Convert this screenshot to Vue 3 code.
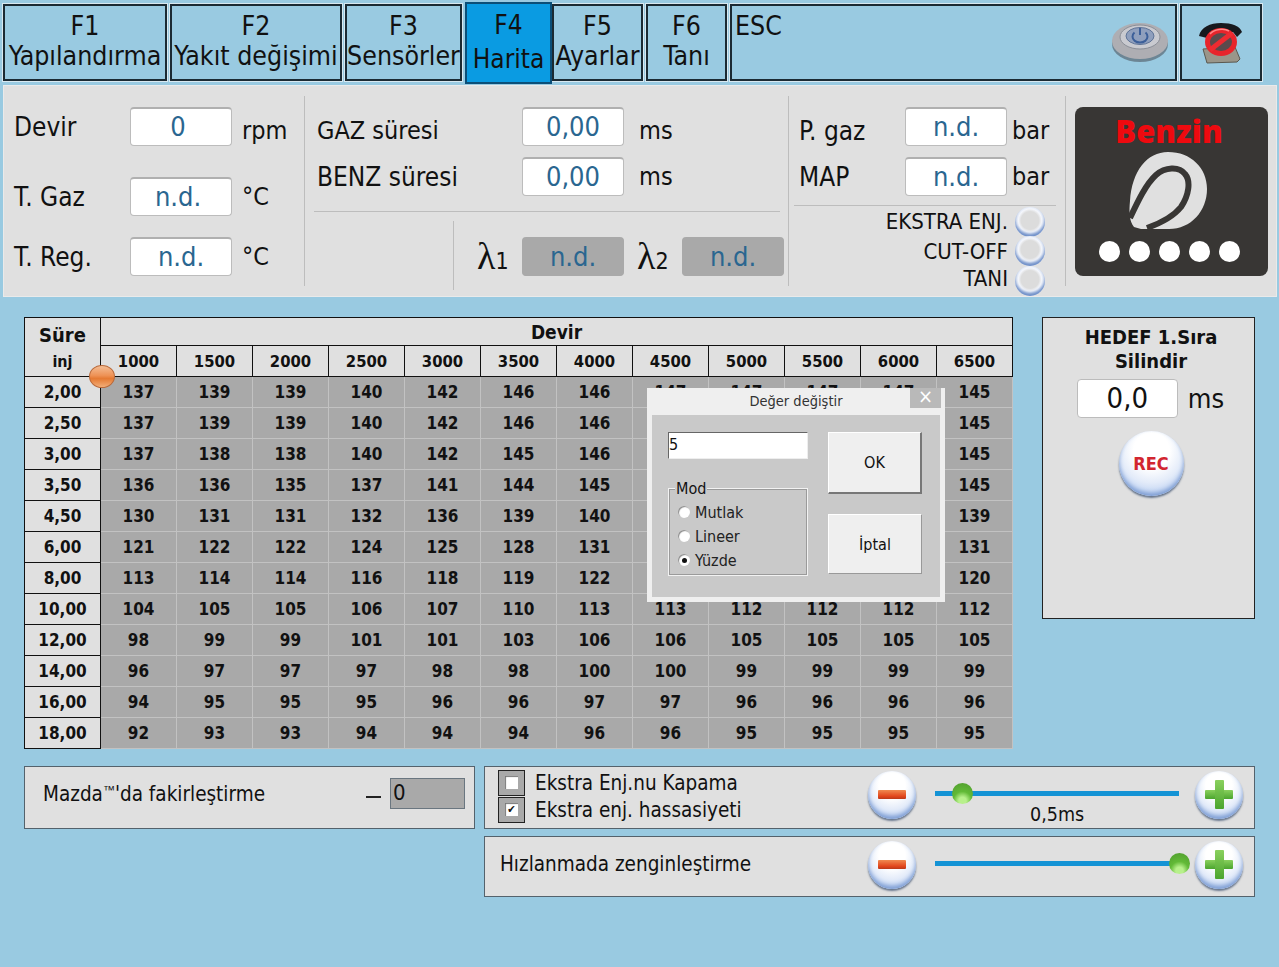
<template>
  <div class="screen">
    <!-- top bar -->
    <div class="topbar">
      <div v-for="t in tabs" :key="t.key" class="tab" :class="{ active: t.active }" :style="{ width: t.w + 'px' }">
        <span>{{ t.key }}</span>
        <span>{{ t.label }}</span>
      </div>
      <div class="tab esc">
        <span class="esc-label">ESC</span>
        <svg class="power" width="60" height="44" viewBox="0 0 60 44">
          <ellipse cx="30" cy="25" rx="28" ry="18" fill="#4f5660" opacity="0.6" />
          <ellipse cx="30" cy="22" rx="28" ry="18" fill="#aeaeb3" />
          <ellipse cx="30" cy="18" rx="20" ry="12" fill="#c9cad0" stroke="#8b8f98" />
          <ellipse cx="30" cy="17" rx="14" ry="8.5" fill="#8f9fbd" stroke="#5f7497" />
          <path d="M24.5 13.5a7.5 6 0 1 0 11 0" fill="none" stroke="#3c5f99" stroke-width="2" />
          <path d="M30 9v7" stroke="#3c5f99" stroke-width="2" />
        </svg>
      </div>
      <div class="tab phone">
        <svg width="46" height="46" viewBox="0 0 46 46">
          <path d="M1 16C3 7 12 3 23 3s19 3 21 9l-5 5-4-5H12l-3 6z" fill="#17191e" />
          <path d="M5 29l32-2 5 12-3 3-30 1z" fill="#9a968a" stroke="#5a584f" />
          <ellipse cx="23" cy="22" rx="16" ry="14" fill="#e8242b" />
          <ellipse cx="23" cy="22" rx="11" ry="9" fill="#5b4a4c" />
          <path d="M12 30L34 13" stroke="#ee2b31" stroke-width="5" />
          <path d="M12 14c4-5 14-6 19-3" fill="none" stroke="#f88" stroke-width="1.5" />
        </svg>
      </div>
    </div>

    <!-- live values -->
    <div class="panel">
      <div class="sec sec-1">
        <div v-for="r in sensors" :key="r.label" class="row-1" :class="r.cls">
          <span class="lbl">{{ r.label }}</span>
          <div class="val" :class="{ nudge: r.nudge }">{{ r.value }}</div>
          <span class="unit" :class="{ down: r.unit === 'rpm' }">{{ r.unit }}</span>
        </div>
      </div>

      <div class="sec sec-2">
        <div class="times">
          <div class="row-2">
            <span class="lbl w205 down gaz">GAZ süresi</span>
            <div class="val">0,00</div>
            <span class="unit ms down">ms</span>
          </div>
          <div class="row-2">
            <span class="lbl w205">BENZ süresi</span>
            <div class="val">0,00</div>
            <span class="unit ms">ms</span>
          </div>
        </div>
        <div class="lambda-row">
          <div class="lambda-group">
            <span class="lam">λ<small>1</small></span>
            <div class="val off">n.d.</div>
            <span class="lam lam-2">λ<small>2</small></span>
            <div class="val off">n.d.</div>
          </div>
        </div>
      </div>

      <div class="sec sec-3">
        <div class="times">
          <div class="row-3">
            <span class="lbl w111 down">P. gaz</span>
            <div class="val">n.d.</div>
            <span class="unit bar down">bar</span>
          </div>
          <div class="row-3">
            <span class="lbl w111">MAP</span>
            <div class="val">n.d.</div>
            <span class="unit bar">bar</span>
          </div>
        </div>
        <div class="leds">
          <div v-for="l in leds" :key="l" class="led-row">
            <span>{{ l }}</span>
            <i class="led"></i>
          </div>
        </div>
      </div>

      <div class="sec-4">
        <div class="logo">
          <div class="logo-title">Benzin</div>
          <svg class="petal" width="80" height="80" viewBox="0 0 80 80">
            <path d="M5 76C0 70 0 60 1 50 3 20 18 1 39 1c23 0 39 16 39 37 0 22-16 40-38 40H12z" fill="#e0e0e0" />
            <path d="M1 67C9 50 17 33 27 24 36 16 50 15 56 23c6 7 4 21-4 33-8 10-20 16-34 21" fill="none" stroke="#383634" stroke-width="6" />
          </svg>
          <div class="dots"><i v-for="n in 5" :key="n"></i></div>
        </div>
      </div>
    </div>

    <!-- map + side card -->
    <div class="content">
      <div class="map-wrap">
        <div class="map">
          <div class="c head sure"><b>Süre</b><span>inj</span></div>
          <div class="c head devir">Devir</div>
          <div v-for="r in rpm" :key="r" class="c head rpm">{{ r }}</div>
          <template v-for="row in rows" :key="row.t">
            <div class="c head inj">{{ row.t }}</div>
            <div v-for="(v, i) in row.v" :key="i" class="c cell">{{ v }}</div>
          </template>
        </div>
        <i class="marker"></i>

        <!-- modal -->
        <div class="dialog">
          <div class="dlg-title">
            <span>Değer değiştir</span>
            <i class="dlg-x">×</i>
          </div>
          <div class="dlg-body">
            <div class="dlg-left">
              <div class="dlg-input">5</div>
              <div class="mod">
                <span class="mod-legend">Mod</span>
                <div v-for="m in mods" :key="m" class="radio-row">
                  <i class="radio" :class="{ on: m === 'Yüzde' }"></i>{{ m }}
                </div>
              </div>
            </div>
            <div class="dlg-right">
              <div class="dlg-btn ok">OK</div>
              <div class="dlg-btn cancel">İptal</div>
            </div>
          </div>
        </div>
      </div>

      <div class="side">
        <div class="side-title">HEDEF 1.Sıra<br />Silindir</div>
        <div class="side-row">
          <div class="side-val">0,0</div>
          <span class="side-unit">ms</span>
        </div>
        <div class="round rec">REC</div>
      </div>
    </div>

    <!-- bottom cards -->
    <div class="bottom">
      <div class="card mazda">
        <span class="mazda-txt">Mazda<sup>™</sup>'da fakirleştirme</span>
        <span class="dash"></span>
        <div class="mazda-val">0</div>
      </div>
      <div class="bottom-right">
        <div class="card extra">
          <div class="checks">
            <div class="check-row"><i class="check"><i></i></i>Ekstra Enj.nu Kapama</div>
            <div class="check-row"><i class="check"><i class="tick">✔</i></i>Ekstra enj. hassasiyeti</div>
          </div>
          <div class="round minus"><i></i></div>
          <div class="slider">
            <div class="track"><i class="thumb" style="left: 17px"></i></div>
            <span class="slider-val">0,5ms</span>
          </div>
          <div class="round plus"><i></i><i></i></div>
        </div>
        <div class="card accel">
          <span class="accel-txt">Hızlanmada zenginleştirme</span>
          <div class="round minus"><i></i></div>
          <div class="slider">
            <div class="track"><i class="thumb" style="left: 234px"></i></div>
          </div>
          <div class="round plus"><i></i><i></i></div>
        </div>
      </div>
    </div>
  </div>
</template>

<script setup>
const tabs = [
  { key: 'F1', label: 'Yapılandırma', w: 164 },
  { key: 'F2', label: 'Yakıt değişimi', w: 172 },
  { key: 'F3', label: 'Sensörler', w: 117 },
  { key: 'F4', label: 'Harita', w: 87, active: true },
  { key: 'F5', label: 'Ayarlar', w: 91 },
  { key: 'F6', label: 'Tanı', w: 81 },
]

const sensors = [
  { label: 'Devir', value: '0', unit: 'rpm', cls: 'r-a', nudge: true },
  { label: 'T. Gaz', value: 'n.d.', unit: '°C', cls: 'r-b', nudge: true },
  { label: 'T. Reg.', value: 'n.d.', unit: '°C', cls: 'r-c' },
]

const leds = ['EKSTRA ENJ.', 'CUT-OFF', 'TANI']
const mods = ['Mutlak', 'Lineer', 'Yüzde']
const rpm = [1000, 1500, 2000, 2500, 3000, 3500, 4000, 4500, 5000, 5500, 6000, 6500]

// the dialog hides columns 4500-6000 from the 2,50 row down to 8,00
const rows = [
  { t: '2,00', v: [137, 139, 139, 140, 142, 146, 146, 147, 147, 147, 147, 145] },
  { t: '2,50', v: [137, 139, 139, 140, 142, 146, 146, '', '', '', '', 145] },
  { t: '3,00', v: [137, 138, 138, 140, 142, 145, 146, '', '', '', '', 145] },
  { t: '3,50', v: [136, 136, 135, 137, 141, 144, 145, '', '', '', '', 145] },
  { t: '4,50', v: [130, 131, 131, 132, 136, 139, 140, '', '', '', '', 139] },
  { t: '6,00', v: [121, 122, 122, 124, 125, 128, 131, '', '', '', '', 131] },
  { t: '8,00', v: [113, 114, 114, 116, 118, 119, 122, '', '', '', '', 120] },
  { t: '10,00', v: [104, 105, 105, 106, 107, 110, 113, 113, 112, 112, 112, 112] },
  { t: '12,00', v: [98, 99, 99, 101, 101, 103, 106, 106, 105, 105, 105, 105] },
  { t: '14,00', v: [96, 97, 97, 97, 98, 98, 100, 100, 99, 99, 99, 99] },
  { t: '16,00', v: [94, 95, 95, 95, 96, 96, 97, 97, 96, 96, 96, 96] },
  { t: '18,00', v: [92, 93, 93, 94, 94, 94, 96, 96, 95, 95, 95, 95] },
]
</script>

<style>
html,
body {
  margin: 0;
  background: #99cae1;
}
</style>

<style scoped>
.screen {
  width: 1279px;
  height: 967px;
  overflow: hidden;
  background: #99cae1;
  color: #111;
  font-family: 'DejaVu Sans', Tahoma, sans-serif;
  font-stretch: condensed;
}
i {
  font-style: normal;
  display: block;
}

/* top bar */
.topbar {
  display: flex;
  gap: 3px;
  padding: 4px 0 0 3px;
  height: 81px;
  box-sizing: border-box;
  align-items: flex-start;
}
.tab {
  height: 77px;
  box-sizing: border-box;
  border: 2px solid #1b2a33;
  box-shadow: 0 0 0 1px #d8e8f0;
  display: flex;
  flex-direction: column;
  align-items: center;
  font-size: 26.5px;
  line-height: 30px;
  padding-top: 5px;
  white-space: nowrap;
  background: #99cae1;
}
.tab.active {
  margin-top: -2px;
  height: 82px;
  margin-right: -3px;
  padding-top: 4px;
  line-height: 34px;
  font-size: 26px;
  background: #0a9be2;
  border-color: #0b4f78;
  box-shadow: none;
  z-index: 1;
}
.esc {
  width: 447px;
  position: relative;
  align-items: flex-start;
  padding-left: 3px;
}
.esc-label {
  display: block;
}
.power {
  position: absolute;
  right: 5px;
  top: 13px;
}
.phone {
  width: 82px;
  justify-content: center;
  padding-top: 0;
}

/* live panel */
.panel {
  margin: 4px 2px 0 3px;
  height: 212px;
  background: #e0e0e0;
  box-shadow: inset 0 0 0 1px #eaeaea;
  display: flex;
  font-size: 25px;
}
.sec {
  margin-top: 11px;
  height: 190px;
  border-right: 1px solid #bdbdbd;
  box-sizing: border-box;
}
.sec-1 {
  width: 302px;
  padding: 11px 0 0 11px;
}
.row-1 {
  display: flex;
  align-items: center;
  height: 39px;
}
.r-b {
  margin-top: 31px;
}
.r-c {
  margin-top: 21px;
}
.row-1 .lbl {
  width: 116px;
}
.row-1 .unit {
  margin-left: 10px;
}
.lbl,
.unit {
  white-space: nowrap;
}
.lbl {
  font-size: 26px;
}
.gaz {
  font-size: 25px;
}
.down {
  position: relative;
  top: 4px;
}
.val {
  width: 102px;
  height: 39px;
  box-sizing: border-box;
  flex: none;
  background: #fff;
  border: 1px solid #bcbcbc;
  border-top: 2px solid #b0b0b0;
  border-radius: 4px;
  color: #2a6690;
  font-size: 27px;
  line-height: 35px;
  text-align: center;
}
.val.nudge {
  padding-right: 6px;
}
.val.off {
  background: #a9a9a9;
  border-color: #a9a9a9;
}

.sec-2 {
  width: 484px;
  padding: 11px 8px 0 9px;
}
.times {
  display: flex;
  flex-direction: column;
  gap: 11px;
}
.row-2,
.row-3 {
  display: flex;
  align-items: center;
}
.row-2 {
  padding-left: 3px;
}
.w205 {
  width: 205px;
}
.ms {
  margin-left: 15px;
}
.lambda-row {
  margin-top: 15px;
  border-top: 1px solid #bdbdbd;
  height: 79px;
  padding-top: 9px;
  box-sizing: border-box;
  display: flex;
  justify-content: flex-end;
}
.lambda-group {
  width: 331px;
  box-sizing: border-box;
  height: 69px;
  border-left: 1px solid #bdbdbd;
  display: flex;
  align-items: flex-start;
  padding: 16px 0 0 23px;
  margin-right: -4px;
}
.lam {
  width: 45px;
  flex: none;
  font-family: 'Liberation Serif', serif;
  font-size: 38px;
  line-height: 38px;
  white-space: nowrap;
}
.lam small {
  font-family: 'DejaVu Sans', sans-serif;
  font-size: 23px;
}
.lam-2 {
  margin-left: 13px;
}

.sec-3 {
  width: 277px;
  padding: 11px 9px 0 5px;
}
.w111 {
  width: 111px;
  padding-left: 5px;
  box-sizing: border-box;
}
.bar {
  margin-left: 5px;
}
.leds {
  margin-top: 9px;
  border-top: 1px solid #bdbdbd;
  font-size: 22px;
}
.led-row {
  height: 29.5px;
  display: flex;
  align-items: center;
  justify-content: flex-end;
  padding-right: 11px;
  gap: 7px;
  position: relative;
  top: 1px;
}
.led-row:last-child span {
  position: relative;
  top: -2px;
}
.led {
  width: 30px;
  height: 30px;
  border-radius: 50%;
  box-sizing: border-box;
  background: radial-gradient(circle at 50% 45%, #dcdcdc 0 40%, #f4f6fb 52%, #9db6e2 100%);
  box-shadow: inset 0 -3px 3px #6f8fc8;
  flex: none;
}
.sec-4 {
  padding: 22px 0 0 9px;
}
.logo {
  width: 193px;
  height: 169px;
  box-sizing: border-box;
  padding-right: 5px;
  border-radius: 8px;
  background: #383634;
  display: flex;
  flex-direction: column;
  align-items: center;
}
.logo-title {
  font-family: 'Open Sans', 'DejaVu Sans', sans-serif;
  font-stretch: normal;
  color: #ee0a0f;
  font-weight: 800;
  font-size: 31px;
  line-height: 38px;
  margin-top: 5px;
}
.petal {
  margin-top: 1px;
}
.dots {
  display: flex;
  gap: 9px;
  margin-top: 10px;
}
.dots i {
  width: 21px;
  height: 21px;
  border-radius: 50%;
  background: #fff;
}

/* map */
.content {
  display: flex;
  padding: 20px 0 0 24px;
  align-items: flex-start;
}
.map-wrap {
  position: relative;
  width: 989px;
  height: 432px;
}
.map {
  display: grid;
  grid-template-columns: 77px repeat(12, 76px);
  grid-template-rows: 29px 31px repeat(12, 31px);
  font-weight: 700;
  font-size: 17px;
}
.c {
  box-sizing: border-box;
  display: flex;
  align-items: center;
  justify-content: center;
}
.head {
  background: #e0e0e0;
  border-right: 1px solid #111;
  border-bottom: 1px solid #111;
}
.sure {
  grid-row: 1 / 3;
  border-left: 1px solid #111;
  border-top: 1px solid #111;
  flex-direction: column;
  gap: 5px;
  font-size: 16px;
}
.sure b {
  font-size: 20px;
}
.devir {
  grid-column: 2 / 14;
  border-top: 1px solid #111;
  font-size: 19px;
}
.rpm {
  font-size: 16.5px;
}
.inj {
  border-left: 1px solid #111;
}
.cell {
  background: #a9a9a9;
  border-right: 1px solid #c2c2c2;
  border-bottom: 1px solid #c2c2c2;
}
.marker {
  position: absolute;
  left: 65px;
  top: 48px;
  width: 26px;
  height: 23px;
  border-radius: 50%;
  border: 1px solid #b9693a;
  box-sizing: border-box;
  background: linear-gradient(#f4bd94 0, #ee9256 45%, #e57a33 60%, #f2ad78 100%);
}

/* dialog */
.dialog {
  position: absolute;
  left: 623px;
  top: 71px;
  width: 298px;
  height: 214px;
  box-sizing: border-box;
  background: #efefef;
  padding: 0 5px 5px;
  display: flex;
  flex-direction: column;
}
.dlg-title {
  height: 27px;
  flex: none;
  position: relative;
  font-size: 14.5px;
  line-height: 27px;
  text-align: center;
  color: #333;
}
.dlg-x {
  position: absolute;
  right: -1px;
  top: 0;
  width: 31px;
  height: 20px;
  line-height: 17px;
  background: #b9b9b9;
  color: #fff;
  font-size: 20px;
}
.dlg-body {
  flex: 1;
  background: #c9c9c9;
  display: flex;
  padding: 17px 18px 0 16px;
  gap: 20px;
}
.dlg-left {
  width: 140px;
}
.dlg-input {
  height: 27px;
  box-sizing: border-box;
  background: #fff;
  border-top: 1px solid #666;
  border-left: 1px solid #666;
  border-right: 1px solid #eee;
  border-bottom: 1px solid #eee;
  font-size: 16px;
  line-height: 24px;
}
.mod {
  margin-top: 29px;
  height: 88px;
  box-sizing: border-box;
  border: 1px solid #f2f2f2;
  outline: 1px solid #9a9a9a;
  outline-offset: -2px;
  position: relative;
  padding: 11px 0 0 9px;
  font-size: 16px;
}
.mod-legend {
  position: absolute;
  left: 6px;
  top: -9px;
  line-height: 18px;
  background: #c9c9c9;
  padding: 0 1px;
}
.radio-row {
  display: flex;
  align-items: center;
  height: 24px;
  gap: 5px;
  color: #222;
}
.radio {
  width: 12px;
  height: 12px;
  border-radius: 50%;
  background: #fff;
  box-shadow: inset 1px 1px 1px #888;
  position: relative;
}
.radio.on::after {
  content: '';
  position: absolute;
  left: 3.5px;
  top: 3.5px;
  width: 5px;
  height: 5px;
  border-radius: 50%;
  background: #111;
}
.dlg-right {
  width: 94px;
}
.dlg-btn {
  background: #efefef;
  display: flex;
  align-items: center;
  justify-content: center;
  box-sizing: border-box;
  font-size: 16px;
  border-top: 1px solid #fff;
  border-left: 1px solid #fff;
  border-right: 2px solid #777;
  border-bottom: 2px solid #777;
}
.ok {
  height: 62px;
}
.cancel {
  height: 60px;
  margin-top: 20px;
  border-right-width: 1px;
  border-bottom-width: 1px;
  border-right-color: #999;
  border-bottom-color: #999;
}

/* side card */
.side {
  margin-left: 29px;
  width: 213px;
  height: 302px;
  box-sizing: border-box;
  background: #e0e0e0;
  border: 1px solid #222;
  display: flex;
  flex-direction: column;
  align-items: center;
  padding: 7px 0 0 5px;
}
.side-title {
  font-weight: 700;
  font-size: 20px;
  line-height: 24px;
  text-align: center;
}
.side-row {
  display: flex;
  align-items: center;
  gap: 10px;
  margin-top: 6px;
  margin-right: 1px;
}
.side-val {
  width: 101px;
  height: 39px;
  box-sizing: border-box;
  background: #fff;
  border: 1px solid #bcbcbc;
  border-radius: 4px;
  text-align: center;
  font-size: 29px;
  line-height: 36px;
}
.side-unit {
  font-size: 27px;
}
.round {
  border-radius: 50%;
  box-sizing: border-box;
  background: radial-gradient(circle at 50% 30%, #ffffff 0 32%, #e3ebf9 58%, #b4cbf0 85%, #86a3d2 100%);
  box-shadow: inset 0 -3px 4px #7f9ed3, 0 2px 2px #66758c;
  flex: none;
  position: relative;
}
.rec {
  width: 65px;
  height: 65px;
  margin-top: 13px;
  color: #d22630;
  font-size: 18px;
  font-weight: 700;
  display: flex;
  align-items: center;
  justify-content: center;
}

/* bottom */
.bottom {
  display: grid;
  grid-template-columns: 451px 771px;
  gap: 9px;
  padding: 17px 0 0 24px;
  align-items: start;
}
.bottom-right {
  display: flex;
  flex-direction: column;
  gap: 7px;
}
.card {
  background: #e0e0e0;
  border: 1px solid #54626c;
  box-sizing: border-box;
  display: flex;
  align-items: center;
  font-size: 20.5px;
  white-space: nowrap;
}
.mazda {
  height: 63px;
  padding: 0 9px 8px 18px;
}
.mazda-txt sup {
  font-family: 'Liberation Sans', sans-serif;
  font-size: 12px;
  vertical-align: 7px;
  line-height: 0;
}
.dash {
  margin-left: auto;
  width: 15px;
  height: 2px;
  background: #222;
  margin-top: 6px;
  margin-right: 9px;
}
.mazda-val {
  width: 75px;
  height: 31px;
  box-sizing: border-box;
  background: #a9a9a9;
  border: 1px solid #6a7680;
  padding-left: 2px;
  font-size: 22px;
  line-height: 28px;
}
.extra {
  height: 63px;
  position: relative;
  padding: 0 0 5px 13px;
}
.checks {
  width: 370px;
  flex: none;
  position: relative;
  top: 1px;
}
.check-row {
  display: flex;
  align-items: center;
  height: 27px;
  gap: 10px;
}
.check {
  width: 27px;
  height: 26px;
  box-sizing: border-box;
  border: 1px solid #222;
  background: #a9a9a9;
  display: flex;
  align-items: center;
  justify-content: center;
}
.check > i {
  width: 13px;
  height: 13px;
  background: #fff;
  box-shadow: inset 1px 1px 1px #777;
  color: #111;
  font-size: 11px;
  line-height: 13px;
  text-align: center;
}
.accel {
  height: 61px;
  padding: 0 0 3px 15px;
}
.accel-txt {
  width: 368px;
  flex: none;
  padding-bottom: 3px;
}
.minus,
.plus {
  width: 48px;
  height: 48px;
}
.plus {
  left: 1px;
}
.minus i {
  position: absolute;
  left: 10px;
  top: 19px;
  width: 28px;
  height: 9px;
  border-radius: 1px;
  background: linear-gradient(#f08a50 0, #e2461c 70%, #b93a1a 100%);
}
.plus i {
  position: absolute;
  background: linear-gradient(#8ad05e, #4ba52e);
  border-radius: 1px;
}
.plus i:nth-child(1) {
  left: 10px;
  top: 19px;
  width: 28px;
  height: 9px;
}
.plus i:nth-child(2) {
  left: 19.5px;
  top: 9px;
  width: 9px;
  height: 29px;
}
.slider {
  width: 244px;
  margin: 0 15px 0 19px;
  flex: none;
  position: relative;
  height: 5px;
  top: -2px;
}
.track {
  height: 5px;
  background: #1493d5;
  position: relative;
}
.thumb {
  position: absolute;
  top: -8px;
  width: 21px;
  height: 21px;
  border-radius: 50%;
  background: radial-gradient(circle at 50% 85%, #b8f08c 0 18%, #62ba37 45%, #4f9b2e 100%);
}
.slider-val {
  position: absolute;
  top: 11px;
  left: 95px;
  font-size: 19.5px;
  line-height: 26px;
}
</style>
